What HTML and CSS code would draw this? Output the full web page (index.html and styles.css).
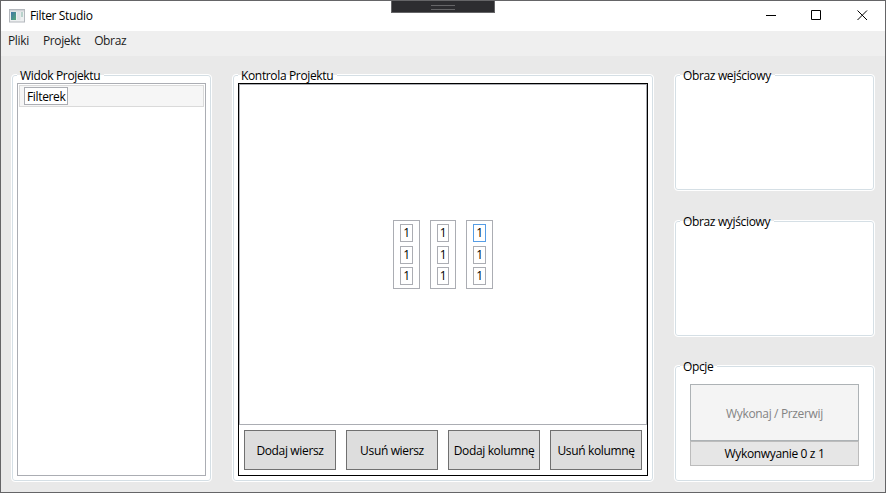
FILE: index.html
```html
<!DOCTYPE html>
<html lang="pl">
<head>
<meta charset="utf-8">
<title>Filter Studio</title>
<link rel="stylesheet" href="styles.css">
</head>
<body>
<div class="window">
  <header class="titlebar">
    <svg class="app-icon" width="16" height="14" viewBox="0 0 16 14">
      <defs><linearGradient id="g" x1="0" y1="0" x2="1" y2="1"><stop offset="0" stop-color="#3f75a8"/><stop offset="1" stop-color="#56a878"/></linearGradient></defs>
      <rect x=".5" y=".5" width="15" height="12.5" fill="#eef0f1" stroke="#b4b8bd"/>
      <rect x="1" y="1" width="14" height="1.5" fill="#d0d3d7"/>
      <rect x="2" y="3" width="5" height="8" fill="url(#g)"/>
      <rect x="8" y="3" width="3.5" height="8" fill="#e0e3e6"/>
      <rect x="12" y="3" width="2" height="5" fill="#b9d3cc"/>
    </svg>
    <span class="title">Filter Studio</span>
    <svg class="controls" width="104" height="12" viewBox="0 0 104 12" fill="none" stroke="#000">
      <path d="M0 5.500h10M45.500 .5h9v9h-9zM91.500 .5l9.500 9.500M101 .5l-9.500 9.500"/>
    </svg>
  </header>
  <nav class="menu"><span>Pliki</span><span>Projekt</span><span>Obraz</span></nav>
  <main class="content">
    <section class="group">
      <h2 class="caption">Widok Projektu</h2>
      <div class="list"><div class="item"><span class="name">Filterek</span></div></div>
    </section>
    <section class="group">
      <h2 class="caption">Kontrola Projektu</h2>
      <div class="editor">
        <div class="canvas">
          <div class="matrix">
            <div class="col"><span>1</span><span>1</span><span>1</span></div>
            <div class="col narrow"><span>1</span><span>1</span><span>1</span></div>
            <div class="col"><span class="focused">1</span><span>1</span><span>1</span></div>
          </div>
        </div>
        <div class="buttons">
          <button>Dodaj wiersz</button><button>Usuń wiersz</button><button>Dodaj kolumnę</button><button>Usuń kolumnę</button>
        </div>
      </div>
    </section>
    <div class="side">
      <section class="group"><h2 class="caption">Obraz wejściowy</h2></section>
      <section class="group"><h2 class="caption">Obraz wyjściowy</h2></section>
      <section class="group options">
        <h2 class="caption">Opcje</h2>
        <button class="run" disabled>Wykonaj / Przerwij</button>
        <div class="progress">Wykonwyanie 0 z 1</div>
      </section>
    </div>
  </main>
  <div class="debug-bar"></div>
</div>
</body>
</html>
```
FILE: styles.css
```css
* { box-sizing: border-box; }
body {
  margin: 0;
  font: 12px/16px "Open Sans", "Noto Sans", sans-serif;
  letter-spacing: -0.35px;
  color: #000;
}
.window {
  position: relative;
  width: 886px;
  height: 493px;
  border: 1px solid #656567;
  background: #e9e9e9;
  display: flex;
  flex-direction: column;
  overflow: hidden;
}
.titlebar {
  flex: none;
  height: 30px;
  background: #fff;
  display: flex;
  align-items: center;
  padding: 0 15px 0 8px;
}
.app-icon { margin-right: 5px; }
.title { flex: 1; }
.menu {
  flex: none;
  height: 25px;
  background: #efefef;
  display: flex;
  gap: 14px;
  padding: 2px 7px;
  color: #212121;
}
.content {
  flex: 1;
  display: grid;
  grid-template-columns: 201px 422px 201px;
  column-gap: 20px;
  padding: 18px 0 10px 10px;
}
.group {
  position: relative;
  background: #fff;
  border: 1px solid #fff;
  border-radius: 4px;
  box-shadow: inset 0 0 0 1px #d5dfe5;
  padding: 8px 5px 5px;
  min-width: 0;
}
.caption {
  position: absolute;
  top: -7px;
  left: 5px;
  margin: 0;
  padding: 0 4px 0 3px;
  font: inherit;
  white-space: nowrap;
  background: linear-gradient(#e9e9e9 7px, #fff 7px, #fff 9px, transparent 9px);
}
.list {
  height: 393px;
  border: 1px solid #abadb3;
  padding: 1px;
}
.item {
  height: 22px;
  border: 1px solid #dadada;
  background: #f6f6f6;
  padding: 1px 4px;
}
.name {
  display: block;
  width: 44px;
  height: 18px;
  line-height: 17px;
  border: 1px solid #abadb3;
  background: #fff;
  padding-left: 2px;
}
.editor {
  height: 393px;
  border: 1px solid #000;
  display: flex;
  flex-direction: column;
}
.canvas {
  height: 341px;
  border: 1px solid #abadb3;
  display: flex;
  justify-content: center;
  align-items: center;
}
.matrix { display: flex; gap: 10px; }
.col {
  width: 27px;
  height: 69px;
  border: 1px solid #abadb3;
  padding: 3px 6px;
  display: flex;
  flex-direction: column;
  justify-content: space-between;
}
.col.narrow { width: 26px; }
.col span {
  height: 18px;
  line-height: 16px;
  border: 1px solid #abadb3;
  text-align: center;
}
.col .focused { border-color: #569de5; }
.buttons {
  flex: 1;
  display: flex;
  gap: 10px;
  padding: 5px;
}
button {
  flex: 1;
  padding: 2px 0 0;
  border: 1px solid #707070;
  border-radius: 0;
  background: #ddd;
  color: #000;
  font: inherit;
  letter-spacing: inherit;
  white-space: nowrap;
}
.side {
  display: grid;
  grid-template-rows: 117px 117px 117px;
  row-gap: 28.5px;
}
.options { padding: 18px 15px; display: flex; flex-direction: column; }
.run {
  flex: none;
  height: 57px;
  border-color: #adb2b5;
  background: #f4f4f4;
  color: #838383;
}
.progress {
  height: 25px;
  border: 1px solid #bcbcbc;
  background: #e6e6e6;
  line-height: 24px;
  text-align: center;
}
.debug-bar {
  position: absolute;
  left: 390px;
  top: -1px;
  width: 104px;
  height: 13px;
  border: 1px solid #656567;
  background: #2d2d30;
}
.debug-bar::after {
  content: "";
  position: absolute;
  left: 39px;
  top: 4px;
  width: 24px;
  height: 3px;
  border: solid #656567;
  border-width: 1px 0;
}
```
